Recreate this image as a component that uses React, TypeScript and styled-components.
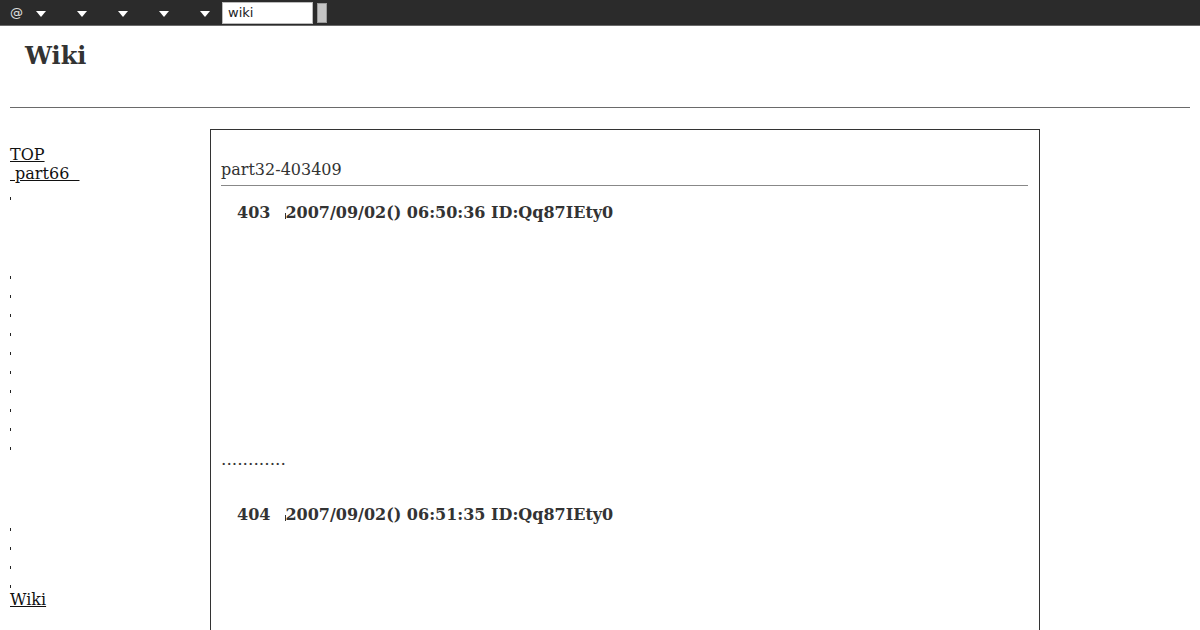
import React from "react";
import styled, { createGlobalStyle } from "styled-components";

const Global = createGlobalStyle`
  html, body { margin: 0; padding: 0; background: #fff; }
  body { font-family: "DejaVu Serif", serif; color: #333; }
`;

const TopBar = styled.div`
  height: 25px;
  background: #2b2b2b;
  border-bottom: 1px solid #6a6a6a;
  display: flex;
  align-items: center;
  padding-left: 10px;
  box-sizing: content-box;
`;

const At = styled.span`
  font-family: "DejaVu Sans", sans-serif;
  font-size: 13px;
  color: #e0e0e0;
  width: 26px;
`;

const Caret = styled.span`
  width: 0;
  height: 0;
  border-left: 5px solid transparent;
  border-right: 5px solid transparent;
  border-top: 6px solid #fff;
  margin-right: 31px;
  margin-top: 2px;
`;

const SearchInput = styled.input`
  box-sizing: border-box;
  width: 91px;
  height: 22px;
  margin-left: -19px;
  border: 1px solid #bbb;
  background: #fff;
  font-family: "DejaVu Sans", sans-serif;
  font-size: 13px;
  color: #222;
  padding: 0 5px;
  outline: none;
`;

const SearchButton = styled.span`
  width: 10px;
  height: 20px;
  margin-left: 4px;
  background: #c4c4c4;
  border: 1px solid #999;
  box-sizing: border-box;
`;

const Page = styled.div`
  padding: 0 10px;
`;

const Title = styled.h1`
  margin: 0;
  padding: 14px 0 0 15px;
  height: 67px;
  font-size: 24px;
  font-weight: bold;
  line-height: 32px;
  color: #333;
`;

const Rule = styled.hr`
  margin: 0;
  border: 0;
  border-top: 1px solid #6a6a6a;
`;

const Columns = styled.div`
  display: flex;
  margin-top: 21px;
`;

const Side = styled.nav`
  width: 200px;
  padding-top: 16px;
  display: flex;
  flex-direction: column;
  font-size: 16px;
  line-height: 19px;
`;

const SideLink = styled.a`
  color: #111;
  text-decoration: underline;
  white-space: pre;
  align-self: flex-start;
`;

const TickLine = styled.div<{ $gap?: number }>`
  height: 19px;
  margin-top: ${(p) => p.$gap ?? 0}px;
  position: relative;
`;

const Tick = styled.span`
  position: absolute;
  left: 0;
  top: 14px;
  width: 1px;
  height: 3px;
  background: #222;
`;

const Main = styled.main`
  width: 830px;
  height: 520px;
  box-sizing: border-box;
  border: 1px solid #333;
  border-bottom: 0;
  padding: 30px 11px 0 10px;
`;

const ThreadTitle = styled.div`
  font-size: 16px;
  line-height: 19px;
  padding-bottom: 6px;
  border-bottom: 1px solid #888;
  color: #333;
`;

const PostHead = styled.div<{ $top: number }>`
  margin-top: ${(p) => p.$top}px;
  padding-left: 16px;
  font-size: 16px;
  font-weight: bold;
  line-height: 19px;
  color: #333;
  white-space: pre;
`;

const Num = styled.span`
  margin-right: 15px;
`;

const Mark = styled.span`
  display: inline-block;
  position: relative;
  width: 0;
  &::before {
    content: "";
    position: absolute;
    left: 0;
    top: -5px;
    width: 1px;
    height: 6px;
    background: #333;
  }
`;

const Dots = styled.div`
  margin-top: 228px;
  font-size: 17px;
  line-height: 19px;
  color: #333;
`;

const sideTicksA = 10;
const sideTicksB = 4;

export default function App() {
  return (
    <>
      <Global />
      <TopBar>
        <At>@</At>
        <Caret />
        <Caret />
        <Caret />
        <Caret />
        <Caret />
        <SearchInput defaultValue="wiki" />
        <SearchButton />
      </TopBar>
      <Page>
        <Title>Wiki</Title>
        <Rule />
        <Columns>
          <Side>
            <SideLink>TOP</SideLink>
            <SideLink>{" part66  "}</SideLink>
            <TickLine><Tick /></TickLine>
            {Array.from({ length: sideTicksA }).map((_, i) => (
              <TickLine key={"a" + i} $gap={i === 0 ? 60 : 0}><Tick /></TickLine>
            ))}
            {Array.from({ length: sideTicksB }).map((_, i) => (
              <TickLine key={"b" + i} $gap={i === 0 ? 62 : 0}><Tick /></TickLine>
            ))}
            <SideLink>Wiki</SideLink>
          </Side>
          <Main>
            <ThreadTitle>part32-403409</ThreadTitle>
            <PostHead $top={17}>
              <Num>403</Num>
              <Mark />2007/09/02() 06:50:36 ID:Qq87IEty0
            </PostHead>
            <Dots>............</Dots>
            <PostHead $top={36}>
              <Num>404</Num>
              <Mark />2007/09/02() 06:51:35 ID:Qq87IEty0
            </PostHead>
          </Main>
        </Columns>
      </Page>
    </>
  );
}
